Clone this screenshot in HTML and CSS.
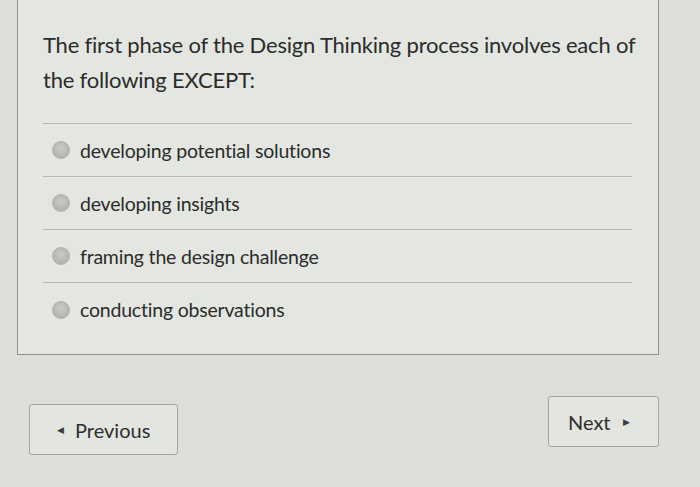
FILE: index.html
```html
<!DOCTYPE html>
<html lang="en">
<head>
    <meta charset="UTF-8">
    <title>Question</title>
    <link rel="stylesheet" href="styles.css">
</head>
<body>
    <div class="question-box">
        <div class="question-text">The first phase of the Design Thinking process involves each of the following EXCEPT:</div>
        <ul class="answers">
            <li class="answer"><span class="radio"></span>developing potential solutions</li>
            <li class="answer"><span class="radio"></span>developing insights</li>
            <li class="answer"><span class="radio"></span>framing the design challenge</li>
            <li class="answer"><span class="radio"></span>conducting observations</li>
        </ul>
    </div>

    <div class="nav">
        <button class="nav-button prev"><span class="arrow">&#9664;</span>Previous</button>
        <button class="nav-button next">Next<span class="arrow">&#9654;</span></button>
    </div>
</body>
</html>
```

FILE: styles.css
```css
body {
    margin: 0;
    background: #dcdfd9;
    font-family: Lato, "Open Sans", sans-serif;
    color: #2b2c2b;
    width: 700px;
    height: 487px;
    overflow: hidden;
}
.question-box {
    margin: -2px 0 0 17px;
    width: 642px;
    height: 357px;
    box-sizing: border-box;
    border: 1px solid #8c8e8a;
    background: #e3e6e1;
    padding: 28px 26px 0 25px;
}
.question-text {
    font-size: 22px;
    line-height: 35px;
    letter-spacing: -0.2px;
    padding-bottom: 26px;
    margin-right: -10px;
}
.answers {
    list-style: none;
    margin: 0;
    padding: 0;
    border-top: 1px solid #b4b7b2;
}
.answer {
    display: flex;
    align-items: center;
    height: 53px;
    font-size: 19.5px;
    letter-spacing: -0.2px;
    border-bottom: 1px solid #b4b7b2;
    padding-left: 9px;
    box-sizing: border-box;
}
.answer:last-child {
    border-bottom: none;
}
.radio {
    width: 16px;
    height: 16px;
    border-radius: 50%;
    border: 1px solid #b0b2ae;
    background: radial-gradient(circle at 50% 40%, #c9cbc7, #a9aba7);
    margin-right: 10px;
    flex-shrink: 0;
}
.nav {
    display: flex;
    justify-content: space-between;
    align-items: flex-start;
    padding: 41px 41px 0 29px;
}
.nav-button {
    font-family: Lato, "Open Sans", sans-serif;
    font-size: 20px;
    color: #2e2f2e;
    background: #e2e5e0;
    border: 1px solid #a2a4a0;
    border-radius: 3px;
    height: 51px;
    display: flex;
    align-items: center;
}
.prev {
    width: 149px;
    margin-top: 8px;
    padding: 0 0 0 27px;
}
.next {
    width: 111px;
    padding: 0 0 0 19px;
}
.arrow {
    font-size: 9px;
    color: #3a3b3a;
}
.prev .arrow {
    margin-right: 11px;
}
.next .arrow {
    margin-left: 12px;
}
```
